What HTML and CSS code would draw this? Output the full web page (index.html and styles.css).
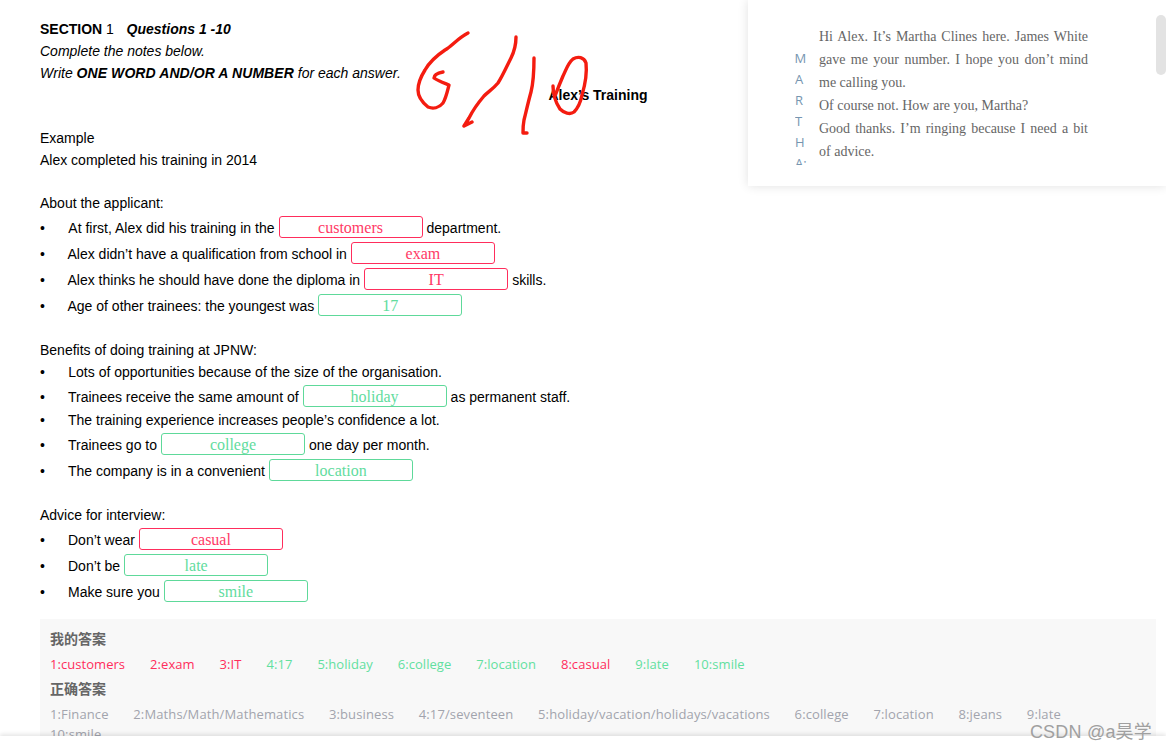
FILE: index.html
```html
<!DOCTYPE html>
<html lang="en">
<head>
<meta charset="utf-8">
<title>Section 1</title>
<link rel="stylesheet" href="styles.css">
</head>
<body>
<main class="paper">
  <p class="line"><b>SECTION</b> 1 &nbsp; <b class="questions"><i>Questions 1 -10</i></b></p>
  <p class="line"><i>Complete the notes below.</i></p>
  <p class="line"><i>Write <b class="stress">ONE WORD AND/OR A NUMBER</b> for each answer.</i></p>
  <p class="line center"><b>Alex’s Training</b></p>

  <section class="block">
    <p class="line">Example</p>
    <p class="line">Alex completed his training in 2014</p>
  </section>

  <section class="block">
    <p class="line">About the applicant:</p>
    <div class="row"><span class="dot wide">•</span>At first, Alex did his training in the<span class="blank wrong">customers</span>department.</div>
    <div class="row"><span class="dot tight">•</span>Alex didn’t have a qualification from school in<span class="blank wrong">exam</span></div>
    <div class="row"><span class="dot tight">•</span>Alex thinks he should have done the diploma in<span class="blank wrong">IT</span>skills.</div>
    <div class="row"><span class="dot tight">•</span>Age of other trainees: the youngest was<span class="blank right">17</span></div>
  </section>

  <section class="block">
    <p class="line">Benefits of doing training at JPNW:</p>
    <p class="line plain"><span class="dot wide">•</span>Lots of opportunities because of the size of the organisation.</p>
    <div class="row"><span class="dot">•</span>Trainees receive the same amount of<span class="blank right">holiday</span>as permanent staff.</div>
    <p class="line plain"><span class="dot">•</span>The training experience increases people’s confidence a lot.</p>
    <div class="row"><span class="dot">•</span>Trainees go to<span class="blank right">college</span>one day per month.</div>
    <div class="row"><span class="dot">•</span>The company is in a convenient<span class="blank right">location</span></div>
  </section>

  <section class="block">
    <p class="line">Advice for interview:</p>
    <div class="row"><span class="dot">•</span>Don’t wear<span class="blank wrong">casual</span></div>
    <div class="row"><span class="dot">•</span>Don’t be<span class="blank right">late</span></div>
    <div class="row"><span class="dot">•</span>Make sure you<span class="blank right">smile</span></div>
  </section>

  <section class="answers">
    <h4 class="answers-title">我的答案</h4>
    <div class="answers-list">
      <span class="ans bad">1:customers</span><span class="ans bad">2:exam</span><span class="ans bad">3:IT</span><span class="ans good">4:17</span><span class="ans good">5:holiday</span><span class="ans good">6:college</span><span class="ans good">7:location</span><span class="ans bad">8:casual</span><span class="ans good">9:late</span><span class="ans good">10:smile</span>
    </div>
    <h4 class="answers-title">正确答案</h4>
    <div class="answers-list">
      <span class="ans key">1:Finance</span><span class="ans key">2:Maths/Math/Mathematics</span><span class="ans key">3:business</span><span class="ans key">4:17/seventeen</span><span class="ans key">5:holiday/vacation/holidays/vacations</span><span class="ans key">6:college</span><span class="ans key">7:location</span><span class="ans key">8:jeans</span><span class="ans key">9:late</span><span class="ans key">10:smile</span>
    </div>
  </section>
</main>

<svg class="scrawl" width="1166" height="752" viewBox="0 0 1166 752" aria-hidden="true">
  <path d="M468 33 C458 38 452 46 445 50 C436 56 429 63 425 70 C420 78 418 84 418 90 C418 98 423 103 428 107 C433 109 439 108 443 103 C446 98 447 93 449 85 C444 83 438 81 434 78 C434 75 438 73 443 72"/>
  <path d="M516 37 C516 44 515 50 511 58 C506 68 502 77 498 83 C493 89 488 92 484 96 C478 103 473 110 469 118 L464 126 L472 122"/>
  <path d="M534 58 C534 70 534 80 531 92 C528 103 526 112 524 120 C523 125 523 129 523 133 L527 133"/>
  <path d="M553 86 C553 94 556 103 560 109 C564 113 570 115 574 112 C579 107 581 100 582 95 C585 85 587 72 586 63 C584 57 578 56 573 59 C568 63 566 70 563 76 C560 83 558 88 555 96"/>
</svg>

<aside class="dialog">
  <div class="dialog-cut"><b>ALEX:</b></div>
  <div class="dialog-body">
    <div class="speaker">M<br>A<br>R<br>T<br>H<br>A:</div>
    <div class="speech">
      <p class="speech-line">Hi Alex. It’s Martha Clines here. James White gave me your number. I hope you don’t mind me calling you.</p>
      <p class="speech-line">Of course not. How are you, Martha?</p>
      <p class="speech-line">Good thanks. I’m ringing because I need a bit of advice.</p>
    </div>
  </div>
</aside>
<div class="thumb"></div>
<div class="footer-strip"></div>
<div class="watermark">CSDN @a昊学</div>
</body>
</html>
```

FILE: styles.css
```css
html, body {
  margin: 0;
  height: 752px;
  overflow: hidden;
  background: #fff;
}
body {
  font-family: "Liberation Sans", Arial, sans-serif;
  font-size: 14px;
  color: #000;
}
p, h4 { margin: 0; }
.paper {
  padding: 18px 10px 0 40px;
}
.line {
  line-height: 22px;
  height: 22px;
}
.center { text-align: center; }
.questions { margin-left: 1px; }
.stress { letter-spacing: 0.08px; }
.block { margin-top: 21px; }
.row {
  display: flex;
  align-items: center;
  box-sizing: border-box;
  height: 26px;
  padding-top: 2px;
  white-space: pre;
}
.dot {
  display: inline-block;
  width: 28px;
  flex: none;
}
.dot.wide { width: 28.3px; }
.dot.tight { width: 27.5px; }
.blank {
  box-sizing: border-box;
  width: 144px;
  height: 22px;
  margin: -2px 4px 0;
  border: 1px solid;
  border-radius: 3px;
  font-family: "Liberation Serif", "Times New Roman", serif;
  font-size: 16px;
  font-weight: 400;
  line-height: 21px;
  text-align: center;
}
.wrong { color: #ff3a66; border-color: #ff2d5c; }
.right { color: #62dc9e; border-color: #5ed99a; }

.answers {
  margin-top: 15px;
  padding: 10px;
  background: #f8f8f8;
  font-family: "Open Sans", "Noto Sans CJK SC", sans-serif;
  font-size: 13px;
  letter-spacing: 0.05px;
}
.answers-title {
  font-family: "Noto Sans CJK SC", sans-serif;
  font-size: 14px;
  font-weight: 700;
  line-height: 18px;
  padding-bottom: 2px;
  letter-spacing: 0;
  color: #666;
}
.answers-list {
  line-height: 20px;
  margin: 5px 0;
}
.ans {
  display: inline-block;
  margin-right: 25px;
}
.bad { color: #ff2d5c; }
.good { color: #62e09f; }
.key { color: #a2a4ad; letter-spacing: 0.12px; margin-right: 24.7px; }

.scrawl {
  position: absolute;
  left: 0;
  top: 0;
  pointer-events: none;
}
.scrawl path {
  fill: none;
  stroke: #f41c10;
  stroke-width: 3.4;
  stroke-linecap: round;
  stroke-linejoin: round;
}

.dialog {
  position: absolute;
  left: 748px;
  top: 0;
  width: 418px;
  height: 186px;
  overflow: hidden;
  background: #fff;
  box-shadow: 0 0 10px rgba(0, 0, 0, 0.12);
}
.dialog-cut {
  position: absolute;
  left: 47px;
  top: -13px;
  font-size: 13px;
  line-height: 18px;
  color: #555;
}
.dialog-body {
  display: flex;
  padding: 25px 0 0 47px;
}
.speaker {
  width: 24px;
  flex: none;
  box-sizing: border-box;
  height: 140px;
  overflow: hidden;
  padding-top: 23px;
  font-family: "Open Sans", sans-serif;
  font-size: 13px;
  line-height: 21px;
  color: #7695b0;
  text-indent: -0.5px;
}
.speech {
  width: 269px;
  font-family: "Liberation Serif", "Times New Roman", serif;
  font-size: 14px;
  line-height: 23px;
  color: #666;
}
.speech-line {
  text-align: justify;
}
.thumb {
  position: absolute;
  left: 1156px;
  top: 15px;
  width: 10px;
  height: 60px;
  border-radius: 5px;
  background: #e3e3e3;
}
.footer-strip {
  position: absolute;
  left: 0;
  top: 736px;
  width: 1166px;
  height: 16px;
  background: #fff;
  box-shadow: 0 -2px 4px rgba(0, 0, 0, 0.1);
}
.watermark {
  position: absolute;
  right: 14px;
  top: 720px;
  font-family: "Liberation Sans", "Noto Sans CJK SC", sans-serif;
  font-size: 18px;
  line-height: 24px;
  letter-spacing: 0.2px;
  color: #a0a0a0;
}
```
